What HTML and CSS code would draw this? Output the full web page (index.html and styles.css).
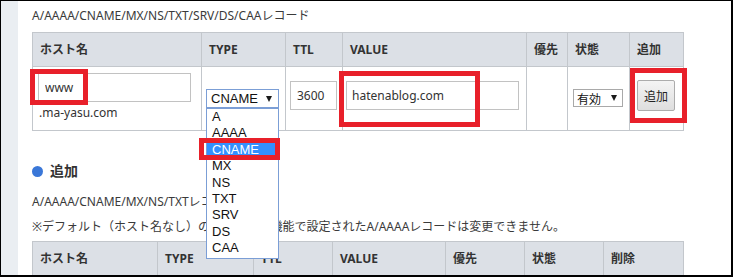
FILE: index.html
```html
<!DOCTYPE html>
<html lang="ja">
<head>
<meta charset="utf-8">
<title>DNS</title>
<link rel="stylesheet" href="styles.css">
</head>
<body>
<div class="frame">
  <div class="side"></div>
  <div class="main">
    <p class="caption">A/AAAA/CNAME/MX/NS/TXT/SRV/DS/CAAレコード</p>
    <div class="grid grid-edit">
      <div class="th">ホスト名</div>
      <div class="th">TYPE</div>
      <div class="th">TTL</div>
      <div class="th">VALUE</div>
      <div class="th">優先</div>
      <div class="th">状態</div>
      <div class="th">追加</div>
      <div class="td td-host">
        <input class="field field-host" type="text" value="www">
        <div class="domain">.ma-yasu.com</div>
      </div>
      <div class="td td-type">
        <div class="select select-type"><span>CNAME</span><span class="caret"></span></div>
      </div>
      <div class="td td-ttl"><input class="field field-ttl" type="text" value="3600"></div>
      <div class="td td-value"><input class="field field-value" type="text" value="hatenablog.com"></div>
      <div class="td"></div>
      <div class="td td-state">
        <div class="select select-state"><span>有効</span><span class="caret"></span></div>
      </div>
      <div class="td td-add"><button class="btn" type="button">追加</button></div>
    </div>

    <h2 class="section"><span class="dot"></span>追加</h2>
    <p class="note">A/AAAA/CNAME/MX/NS/TXTレコードの追加</p>
    <p class="note note-gap">※デフォルト（ホスト名なし）の、DNS設定機能で設定されたA/AAAAレコードは変更できません。</p>

    <div class="grid grid-list">
      <div class="th">ホスト名</div>
      <div class="th">TYPE</div>
      <div class="th">TTL</div>
      <div class="th">VALUE</div>
      <div class="th">優先</div>
      <div class="th">状態</div>
      <div class="th">削除</div>
    </div>
  </div>

  <ul class="dropdown">
    <li>A</li>
    <li>AAAA</li>
    <li class="active">CNAME</li>
    <li>MX</li>
    <li>NS</li>
    <li>TXT</li>
    <li>SRV</li>
    <li>DS</li>
    <li>CAA</li>
  </ul>

  <div class="mark mark-host"></div>
  <div class="mark mark-cname"></div>
  <div class="mark mark-value"></div>
  <div class="mark mark-add"></div>
</div>
</body>
</html>
```

FILE: styles.css
```css
* { box-sizing: border-box; }

html, body {
  margin: 0;
  padding: 0;
  background: #ffffff;
}

body {
  font-family: "Noto Sans", "Noto Sans CJK JP", sans-serif;
  font-size: 12px;
  color: #333333;
}

.frame {
  position: relative;
  width: 733px;
  height: 277px;
  border-top: 1px solid #000;
  border-left: 1px solid #000;
  border-right: 2px solid #000;
  border-bottom: 2px solid #000;
  display: flex;
  overflow: hidden;
  background: #fff;
}

.side {
  width: 17px;
  flex: none;
  background: #eaeef2;
}

.main {
  flex: 1;
  padding-left: 14px;
}

.caption {
  margin: 6px 0 7px;
  line-height: 18px;
  color: #3a3a3a;
}

.grid {
  display: grid;
  gap: 1px;
  width: max-content;
  background: #c3c7cc;
  border: 1px solid #c3c7cc;
}

.grid-edit {
  grid-template-columns: 168px 83px 56px 183px 40px 61px 53px;
  grid-template-rows: 33px 63px;
}

.grid-list {
  margin-top: 4px;
  grid-template-columns: 124px 95px 78px 112px 78px 78px 79px;
  grid-template-rows: 33px 33px;
}

.th {
  background: #dce0e6;
  font-weight: bold;
  color: #333;
  padding-left: 7px;
  display: flex;
  align-items: center;
  line-height: 16px;
}

.td {
  background: #fff;
}

.field {
  display: block;
  font: inherit;
  font-size: 12px;
  color: #333;
  border: 1px solid #c2c2c2;
  background: #fff;
  height: 29px;
  padding: 0 6px;
  margin: 0;
  outline: none;
}

.td-host { padding: 6px 0 0 5px; }
.field-host { width: 153px; }
.domain {
  margin-top: 2px;
  line-height: 18px;
  padding-left: 1px;
}

.td-type { padding: 22px 0 0 4px; }
.td-ttl { padding: 14px 0 0 4px; }
.field-ttl { width: 47px; }
.td-value { padding: 14px 0 0 3px; }
.field-value { width: 173px; padding: 0 5px; }
.td-state { padding: 22px 0 0 5px; }
.td-add { padding: 13px 0 0 7px; }

.select {
  display: flex;
  align-items: center;
  justify-content: space-between;
  background: #fff;
  font-family: "Liberation Sans", "Noto Sans CJK JP", sans-serif;
  font-size: 13px;
  color: #111;
}

.select-type {
  width: 73px;
  height: 19px;
  border: 1px solid #7b9ed6;
  padding: 0 6px 0 4px;
}

.select-state {
  width: 50px;
  height: 18px;
  border: 1px solid #a9a9a9;
  padding: 0 5px 0 3px;
  font-family: "Noto Sans CJK JP", sans-serif;
  font-size: 12px;
}

.caret {
  width: 0;
  height: 0;
  border-left: 3.5px solid transparent;
  border-right: 3.5px solid transparent;
  border-top: 6px solid #1a1a1a;
}

.btn {
  display: block;
  width: 38px;
  height: 31px;
  margin: 0;
  padding: 0;
  font-family: "Noto Sans CJK JP", sans-serif;
  font-size: 12px;
  color: #222;
  border: 1px solid #acacac;
  border-radius: 2px;
  background: linear-gradient(#f4f4f4, #dedede);
}

.section {
  margin: 30px 0 0;
  font-size: 14px;
  font-weight: bold;
  line-height: 20px;
  color: #333;
  display: flex;
  align-items: center;
}

.dot {
  width: 11px;
  height: 11px;
  border-radius: 50%;
  background: #3a77d8;
  margin-right: 7px;
}

.note {
  margin: 11px 0 0;
  line-height: 20px;
  color: #3a3a3a;
}

.note-gap { margin-top: 5px; }

.dropdown {
  position: absolute;
  left: 205px;
  top: 107px;
  width: 73px;
  height: 151px;
  margin: 0;
  padding: 0;
  list-style: none;
  background: #fff;
  border: 1px solid #7b9ed6;
  font-family: "Liberation Sans", sans-serif;
  font-size: 13px;
  color: #111;
}

.dropdown li {
  height: 16.4px;
  line-height: 16.4px;
  padding-left: 5px;
}

.dropdown li.active {
  background: #3390ff;
  color: #fff;
}

.mark {
  position: absolute;
  border: 5px solid #e8202a;
}

.mark-host { left: 29px; top: 68px; width: 58px; height: 36px; }
.mark-cname { left: 198px; top: 137px; width: 81px; height: 22px; }
.mark-value { left: 338px; top: 70px; width: 141px; height: 56px; }
.mark-add { left: 629px; top: 67px; width: 57px; height: 55px; }
```
